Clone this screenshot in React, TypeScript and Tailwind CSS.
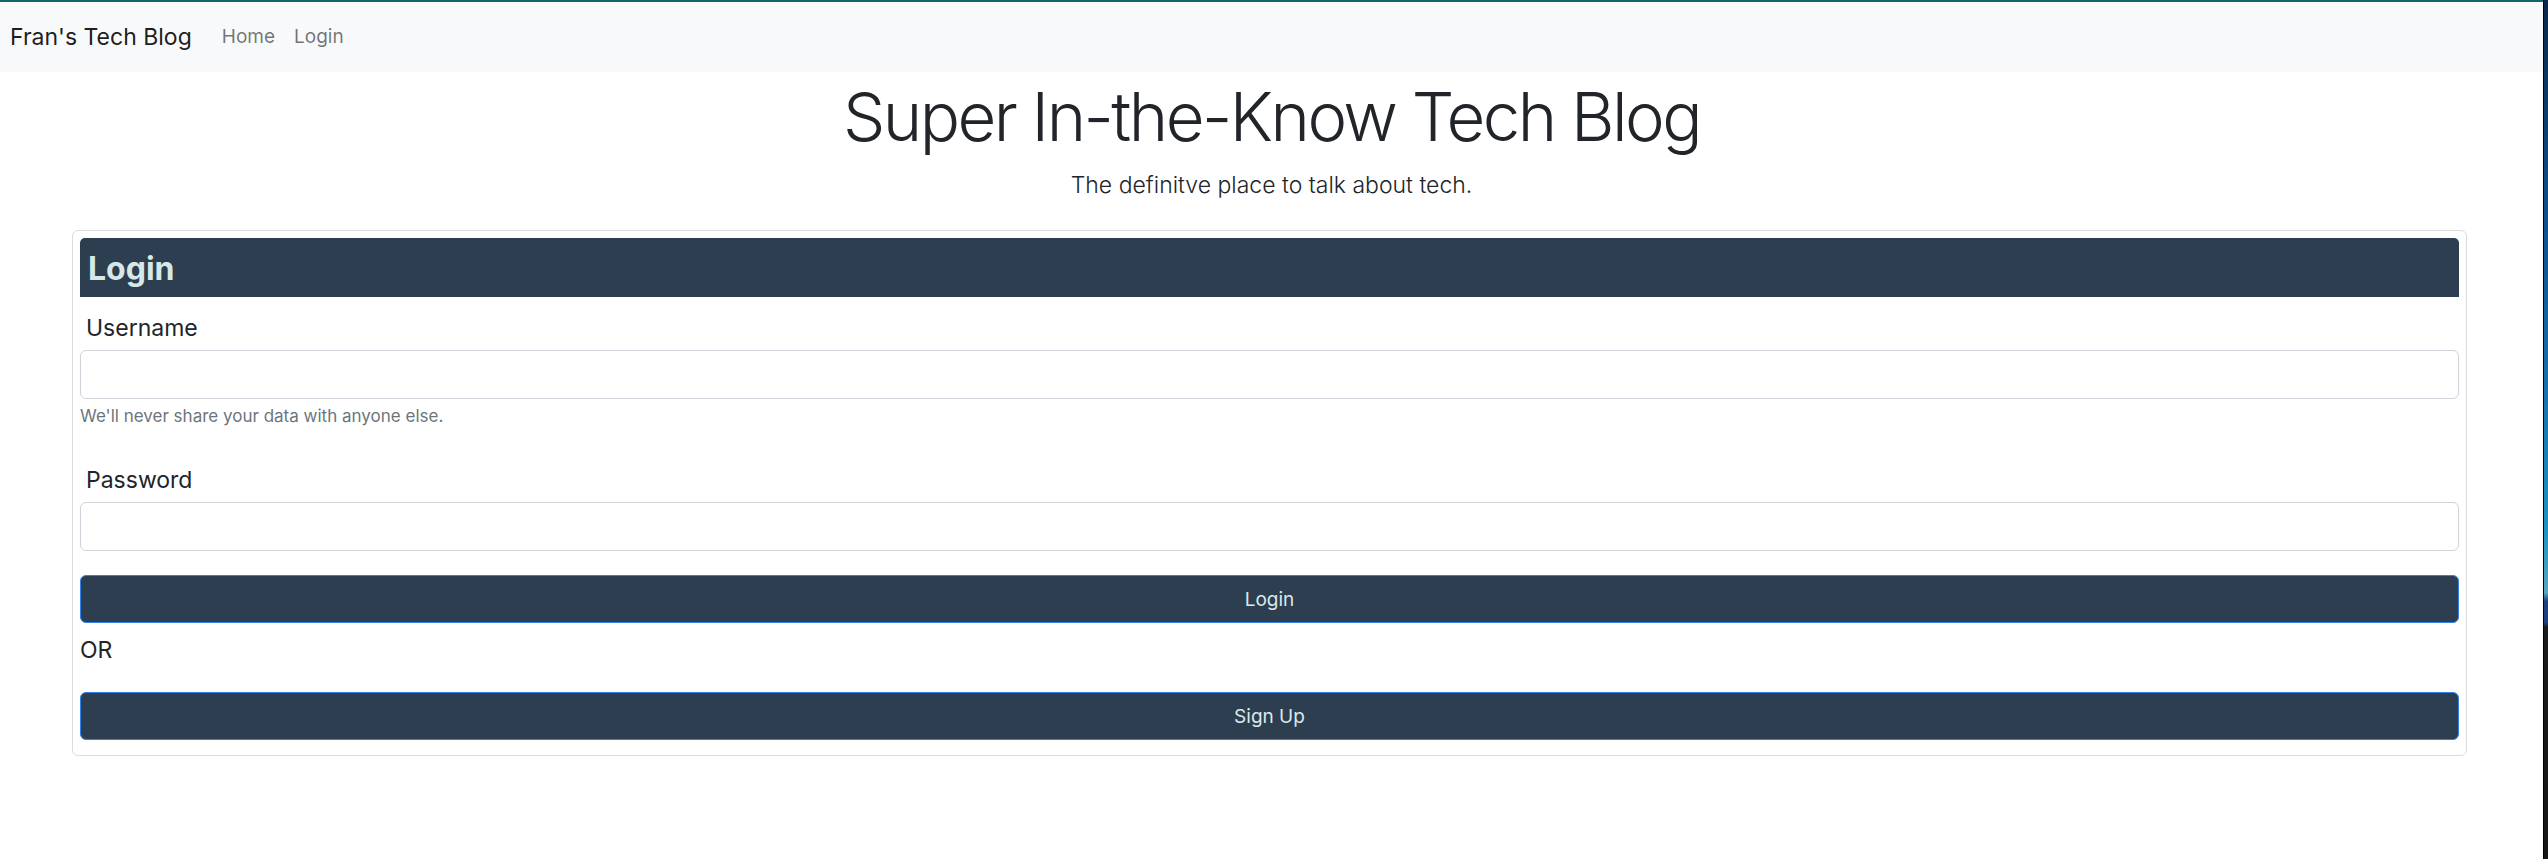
import React from "react";

function Field({ label, help }: { label: string; help?: string }) {
  return (
    <div className="flex flex-col">
      <label className="pl-[6px] text-[23px] leading-none text-[#212529]">{label}</label>
      <input
        type="text"
        className="mt-[10px] h-[49px] w-full rounded-[6px] border border-[#ced4da] bg-white px-3 outline-none"
      />
      {help && (
        <small className="mt-[9px] text-[17px] leading-none text-[#6c757d]">{help}</small>
      )}
    </div>
  );
}

function DarkButton({ children }: { children: React.ReactNode }) {
  return (
    <button
      type="button"
      className="h-[48px] w-full rounded-[6px] border border-[#3480e8] bg-[#2c3e50] pt-[3px] text-[19px] text-[#dbe9ea]"
    >
      {children}
    </button>
  );
}

export default function App() {
  return (
    <div className="flex h-screen w-full bg-white font-['Inter',sans-serif]">
      <div className="min-w-0 flex-1 border-t-2 border-[#12666a]">
        <nav className="flex h-[70px] items-center bg-[#f8f9fa] px-[10px]">
          <span className="mr-[30px] text-[23px] text-black/90">Fran's Tech Blog</span>
          <a className="mr-[19px] text-[19px] text-black/55">Home</a>
          <a className="text-[19px] text-black/55">Login</a>
        </nav>

        <header className="text-center text-[#212529]">
          <h1 className="mt-[11px] text-[67px] font-light leading-none tracking-[-0.038em]">
            Super In-the-Know Tech Blog
          </h1>
          <p className="mt-[24px] text-[23px] font-light leading-none">The definitve place to talk about tech.</p>
        </header>

        <main className="mt-[33px] ml-[72px] mr-[76px] rounded-[6px] border border-[#dcdcdc] px-[7px] pt-[7px] pb-[15px]">
          <div className="h-[59px] rounded-t-[5px] bg-[#2c3e50] pt-[15px] pl-[8px] text-[32px] font-bold leading-none text-[#d6e9e9]">
            Login
          </div>

          <div className="mt-[20px]">
            <Field label="Username" help="We'll never share your data with anyone else." />
          </div>
          <div className="mt-[44px]">
            <Field label="Password" />
          </div>

          <div className="mt-[24px]">
            <DarkButton>Login</DarkButton>
          </div>
          <p className="mt-[16px] text-[23px] leading-none text-[#212529]">OR</p>
          <div className="mt-[30px]">
            <DarkButton>Sign Up</DarkButton>
          </div>
        </main>
      </div>

      {/* sliver of the desktop behind the browser window */}
      <div className="w-[5px] shrink-0 border-l border-black bg-[linear-gradient(to_bottom,#0a2748_0%,#0e4f8c_25%,#1670ad_45%,#1d94c2_62%,#5aa7c0_69%,#1c3f7d_70%,#1c3f7d_72.5%,#1b1b1b_73%,#161616_100%)]" />
    </div>
  );
}
